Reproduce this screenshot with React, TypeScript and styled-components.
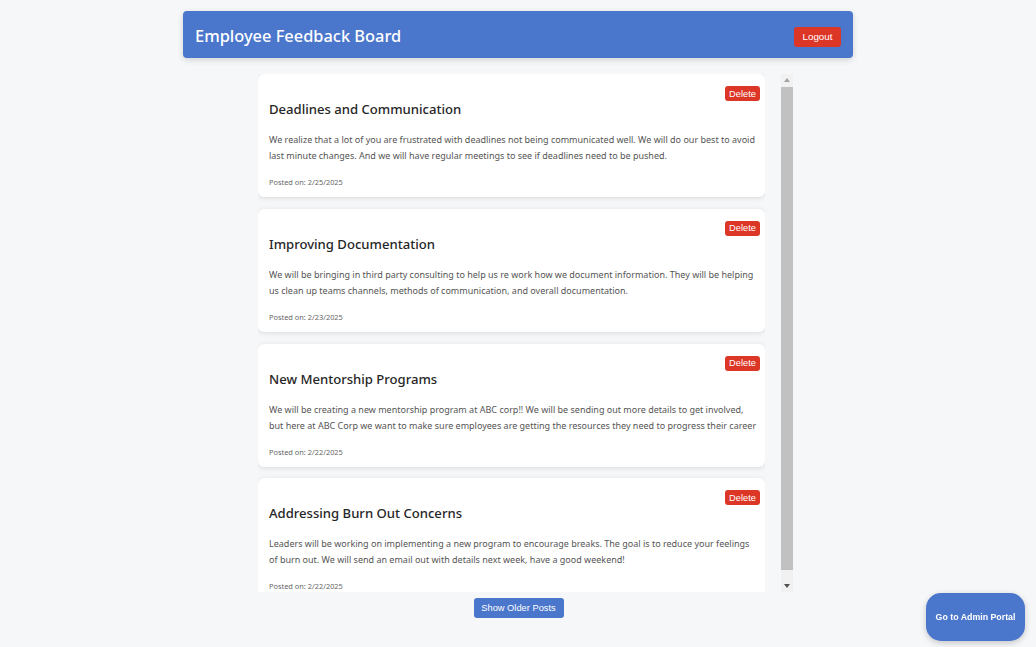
import React from "react";
import styled, { createGlobalStyle } from "styled-components";

const GlobalStyle = createGlobalStyle`
  html, body { margin: 0; padding: 0; }
  body {
    background: #f6f7f9;
    font-family: "Noto Sans", "Open Sans", sans-serif;
    width: 1036px;
    height: 647px;
    overflow: hidden;
  }
`;

const Page = styled.div`
  display: flex;
  flex-direction: column;
  align-items: center;
  padding-top: 11px;
`;

const Header = styled.header`
  width: 670px;
  height: 47px;
  box-sizing: border-box;
  background: #4a76cc;
  border-radius: 4px;
  box-shadow: 0 2px 6px rgba(0, 0, 0, 0.15);
  display: flex;
  align-items: center;
  justify-content: space-between;
  padding: 0 12px 0 12px;
`;

const Title = styled.h1`
  margin: 0;
  color: #ffffff;
  font-family: "Noto Sans", sans-serif;
  font-weight: 500;
  font-size: 16.4px;
  margin-top: 1px;
`;

const RedButton = styled.button<{ $w: number; $h: number }>`
  width: ${(p) => p.$w}px;
  height: ${(p) => p.$h}px;
  background: #dc3626;
  color: #ffffff;
  border: none;
  border-radius: 3px;
  font-family: "Liberation Sans", Arial, sans-serif;
  font-size: ${(p) => (p.$h > 17 ? 9.8 : 9.3)}px;
  padding: 0;
  cursor: pointer;
`;

const LogoutButton = styled(RedButton)`
  margin-top: 4px;
`;

const FeedArea = styled.div`
  display: flex;
  gap: 16px;
  height: 518px;
  margin-top: 16px;
  margin-left: 15px;
`;

const Feed = styled.div`
  width: 507px;
  height: 518px;
  overflow: hidden;
  display: flex;
  flex-direction: column;
  gap: 11.8px;
`;

const ScrollRail = styled.div`
  width: 12px;
  height: 100%;
  background: #f1f1f1;
  display: flex;
  flex-direction: column;
`;

const ScrollArrow = styled.div<{ $color: string }>`
  flex: none;
  height: 12px;
  display: flex;
  align-items: center;
  justify-content: center;
  color: ${(p) => p.$color};
`;

const ScrollTrack = styled.div`
  flex: 1;
  padding: 1px 0 10px 0;
  display: flex;
`;

const ScrollThumb = styled.div`
  flex: 1;
  background: #c1c1c1;
`;

const Card = styled.article`
  flex: none;
  background: #ffffff;
  border-radius: 6px;
  box-shadow: 0 1px 5px rgba(0, 0, 0, 0.12);
  padding: 12px 7px 9px 11px;
  display: flex;
  flex-direction: column;
`;

const CardActions = styled.div`
  display: flex;
  justify-content: flex-end;
  margin-right: -2px;
`;

const CardTitle = styled.h2`
  margin: -1px 0 0 0;
  font-family: "Noto Sans", sans-serif;
  font-weight: 500;
  font-size: 13.1px;
  line-height: 18px;
  color: #262626;
`;

const CardBody = styled.p`
  margin: 14px 0 0 0;
  font-size: 9px;
  line-height: 16px;
  color: #555;
`;

const Posted = styled.div`
  margin-top: 12px;
  font-size: 7.4px;
  line-height: 12px;
  color: #666;
`;

const BlueButton = styled.button`
  background: #4a76cc;
  color: #ffffff;
  border: none;
  font-family: "Liberation Sans", Arial, sans-serif;
  cursor: pointer;
  padding: 0;
`;

const OlderButton = styled(BlueButton)`
  margin-top: 6px;
  width: 90px;
  height: 20px;
  border-radius: 3px;
  font-size: 9.3px;
  margin-left: 1px;
`;

const AdminButton = styled(BlueButton)`
  position: fixed;
  right: 11px;
  bottom: 6px;
  width: 99px;
  height: 48px;
  border-radius: 15px;
  font-size: 8.8px;
  font-weight: bold;
  box-shadow: 0 2px 6px rgba(0, 0, 0, 0.2);
`;

const posts = [
  {
    title: "Deadlines and Communication",
    body: "We realize that a lot of you are frustrated with deadlines not being communicated well. We will do our best to avoid last minute changes. And we will have regular meetings to see if deadlines need to be pushed.",
    date: "2/25/2025",
  },
  {
    title: "Improving Documentation",
    body: "We will be bringing in third party consulting to help us re work how we document information. They will be helping us clean up teams channels, methods of communication, and overall documentation.",
    date: "2/23/2025",
  },
  {
    title: "New Mentorship Programs",
    body: "We will be creating a new mentorship program at ABC corp!! We will be sending out more details to get involved, but here at ABC Corp we want to make sure employees are getting the resources they need to progress their career",
    date: "2/22/2025",
  },
  {
    title: "Addressing Burn Out Concerns",
    body: "Leaders will be working on implementing a new program to encourage breaks. The goal is to reduce your feelings of burn out. We will send an email out with details next week, have a good weekend!",
    date: "2/22/2025",
  },
];

const Arrow = ({ up }: { up?: boolean }) => (
  <svg width="6" height="4" viewBox="0 0 6 4">
    <path d={up ? "M0 4 L3 0 L6 4 Z" : "M0 0 L6 0 L3 4 Z"} fill="currentColor" />
  </svg>
);

export default function App() {
  return (
    <>
      <GlobalStyle />
      <Page>
        <Header>
          <Title>Employee Feedback Board</Title>
          <LogoutButton $w={47} $h={20}>Logout</LogoutButton>
        </Header>
        <FeedArea>
          <Feed>
            {posts.map((p) => (
              <Card key={p.title}>
                <CardActions>
                  <RedButton $w={35} $h={15}>Delete</RedButton>
                </CardActions>
                <CardTitle>{p.title}</CardTitle>
                <CardBody>{p.body}</CardBody>
                <Posted>Posted on: {p.date}</Posted>
              </Card>
            ))}
          </Feed>
          <ScrollRail>
            <ScrollArrow $color="#a3a3a3">
              <Arrow up />
            </ScrollArrow>
            <ScrollTrack>
              <ScrollThumb />
            </ScrollTrack>
            <ScrollArrow $color="#505050">
              <Arrow />
            </ScrollArrow>
          </ScrollRail>
        </FeedArea>
        <OlderButton>Show Older Posts</OlderButton>
      </Page>
      <AdminButton>Go to Admin Portal</AdminButton>
    </>
  );
}
